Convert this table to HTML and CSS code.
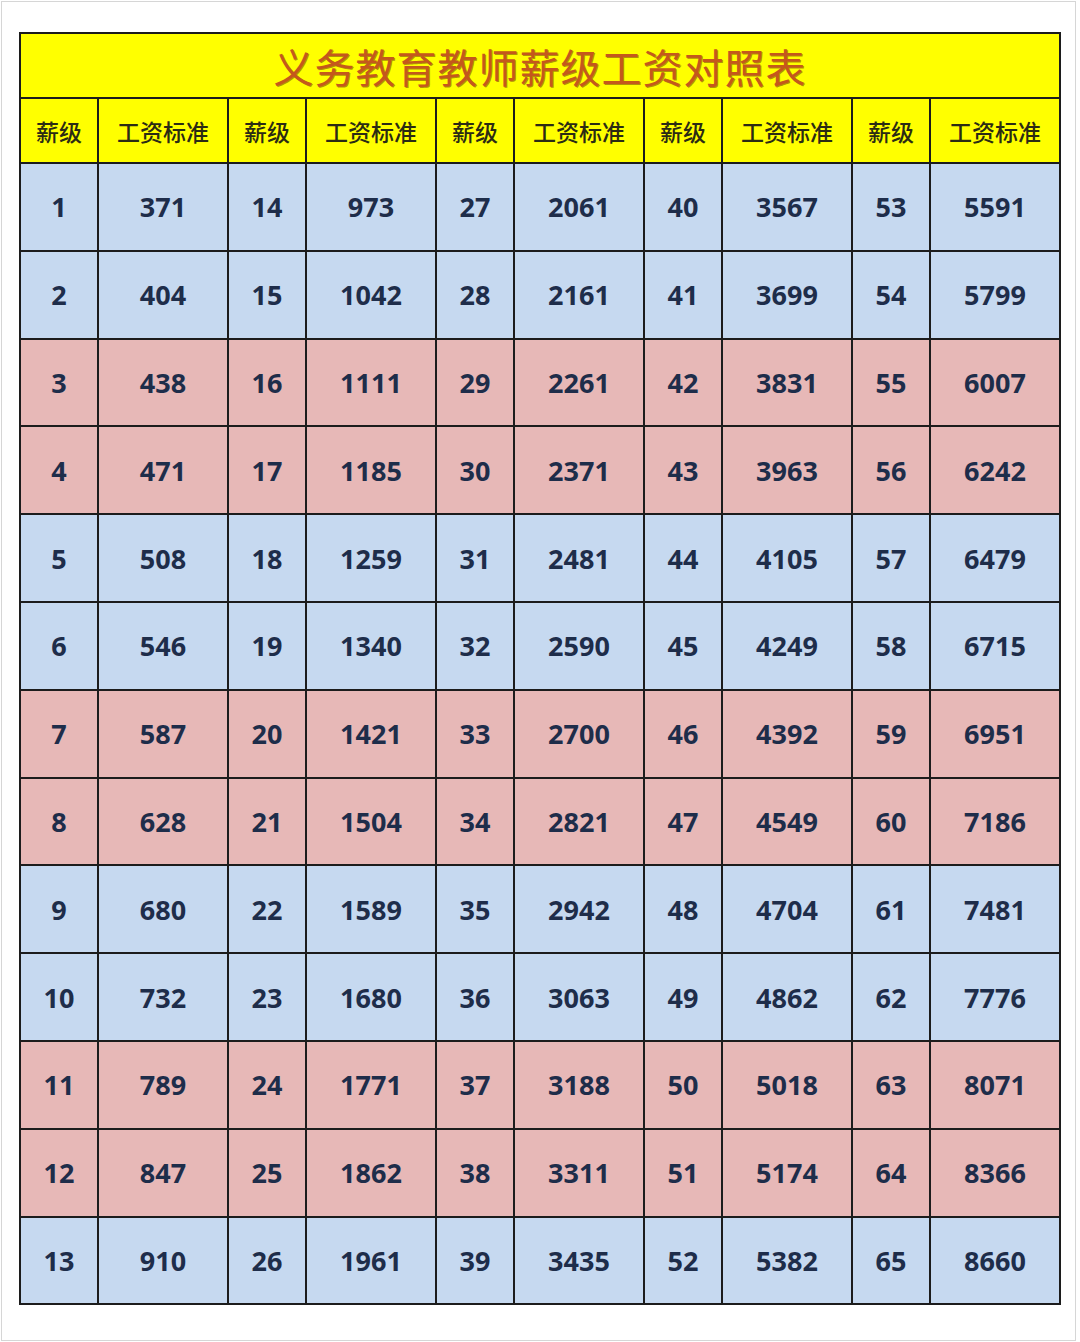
FILE: index.html
```html
<!DOCTYPE html>
<html lang="zh-CN">
<head>
<meta charset="utf-8">
<title>义务教育教师薪级工资对照表</title>
<link rel="stylesheet" href="styles.css">
</head>
<body>
<div class="frame">
  <table class="salary">
    <colgroup>
      <col class="c-lv"><col class="c-val">
      <col class="c-lv"><col class="c-val">
      <col class="c-lv"><col class="c-val">
      <col class="c-lv"><col class="c-val">
      <col class="c-lv"><col class="c-val">
    </colgroup>
    <thead>
      <tr class="title-row"><th colspan="10" class="title">义务教育教师薪级工资对照表</th></tr>
      <tr class="head-row">
        <th>薪级</th><th>工资标准</th>
        <th>薪级</th><th>工资标准</th>
        <th>薪级</th><th>工资标准</th>
        <th>薪级</th><th>工资标准</th>
        <th>薪级</th><th>工资标准</th>
      </tr>
    </thead>
    <tbody>
      <tr class="blue"><td>1</td><td>371</td><td>14</td><td>973</td><td>27</td><td>2061</td><td>40</td><td>3567</td><td>53</td><td>5591</td></tr>
      <tr class="blue"><td>2</td><td>404</td><td>15</td><td>1042</td><td>28</td><td>2161</td><td>41</td><td>3699</td><td>54</td><td>5799</td></tr>
      <tr class="pink"><td>3</td><td>438</td><td>16</td><td>1111</td><td>29</td><td>2261</td><td>42</td><td>3831</td><td>55</td><td>6007</td></tr>
      <tr class="pink"><td>4</td><td>471</td><td>17</td><td>1185</td><td>30</td><td>2371</td><td>43</td><td>3963</td><td>56</td><td>6242</td></tr>
      <tr class="blue"><td>5</td><td>508</td><td>18</td><td>1259</td><td>31</td><td>2481</td><td>44</td><td>4105</td><td>57</td><td>6479</td></tr>
      <tr class="blue"><td>6</td><td>546</td><td>19</td><td>1340</td><td>32</td><td>2590</td><td>45</td><td>4249</td><td>58</td><td>6715</td></tr>
      <tr class="pink"><td>7</td><td>587</td><td>20</td><td>1421</td><td>33</td><td>2700</td><td>46</td><td>4392</td><td>59</td><td>6951</td></tr>
      <tr class="pink"><td>8</td><td>628</td><td>21</td><td>1504</td><td>34</td><td>2821</td><td>47</td><td>4549</td><td>60</td><td>7186</td></tr>
      <tr class="blue"><td>9</td><td>680</td><td>22</td><td>1589</td><td>35</td><td>2942</td><td>48</td><td>4704</td><td>61</td><td>7481</td></tr>
      <tr class="blue"><td>10</td><td>732</td><td>23</td><td>1680</td><td>36</td><td>3063</td><td>49</td><td>4862</td><td>62</td><td>7776</td></tr>
      <tr class="pink"><td>11</td><td>789</td><td>24</td><td>1771</td><td>37</td><td>3188</td><td>50</td><td>5018</td><td>63</td><td>8071</td></tr>
      <tr class="pink"><td>12</td><td>847</td><td>25</td><td>1862</td><td>38</td><td>3311</td><td>51</td><td>5174</td><td>64</td><td>8366</td></tr>
      <tr class="blue"><td>13</td><td>910</td><td>26</td><td>1961</td><td>39</td><td>3435</td><td>52</td><td>5382</td><td>65</td><td>8660</td></tr>
    </tbody>
  </table>
</div>
</body>
</html>
```

FILE: styles.css
```css
html, body {
  margin: 0;
  padding: 0;
  background: #ffffff;
}

body {
  width: 1080px;
  height: 1342px;
  overflow: hidden;
}

.frame {
  box-sizing: border-box;
  margin: 1px 0 0 1px;
  width: 1075px;
  height: 1340px;
  border: 1px solid #d6d6d6;
  padding: 30px 0 0 17px;
  background: #ffffff;
}

.salary {
  border-collapse: collapse;
  table-layout: fixed;
  width: 1042px;
  border: 2px solid #2a2a2a;
}

.c-lv { width: 78px; }
.c-val { width: 130px; }

.salary th,
.salary td {
  border: 2px solid #1c1c1c;
  padding: 0;
  text-align: center;
  vertical-align: middle;
}

.title-row th {
  height: 63px;
  background: #ffff00;
  font-family: "Noto Sans CJK SC", "Noto Sans", sans-serif;
  font-weight: 400;
  font-size: 40px;
  letter-spacing: 1px;
  color: #c4581c;
  text-shadow: 1px 1px 0 rgba(110, 50, 10, 0.55);
}

.head-row th {
  height: 63px;
  background: #ffff00;
  font-family: "Noto Sans CJK SC", "Noto Sans", sans-serif;
  font-weight: 500;
  font-size: 23px;
  color: #2b2b14;
}

.salary td {
  height: 85.8px;
  font-family: "Open Sans", "Liberation Sans", sans-serif;
  font-weight: 700;
  font-size: 27px;
  color: #1e2d4a;
}

.blue td { background: #c6d9f0; }
.pink td { background: #e7b8b7; }
```
